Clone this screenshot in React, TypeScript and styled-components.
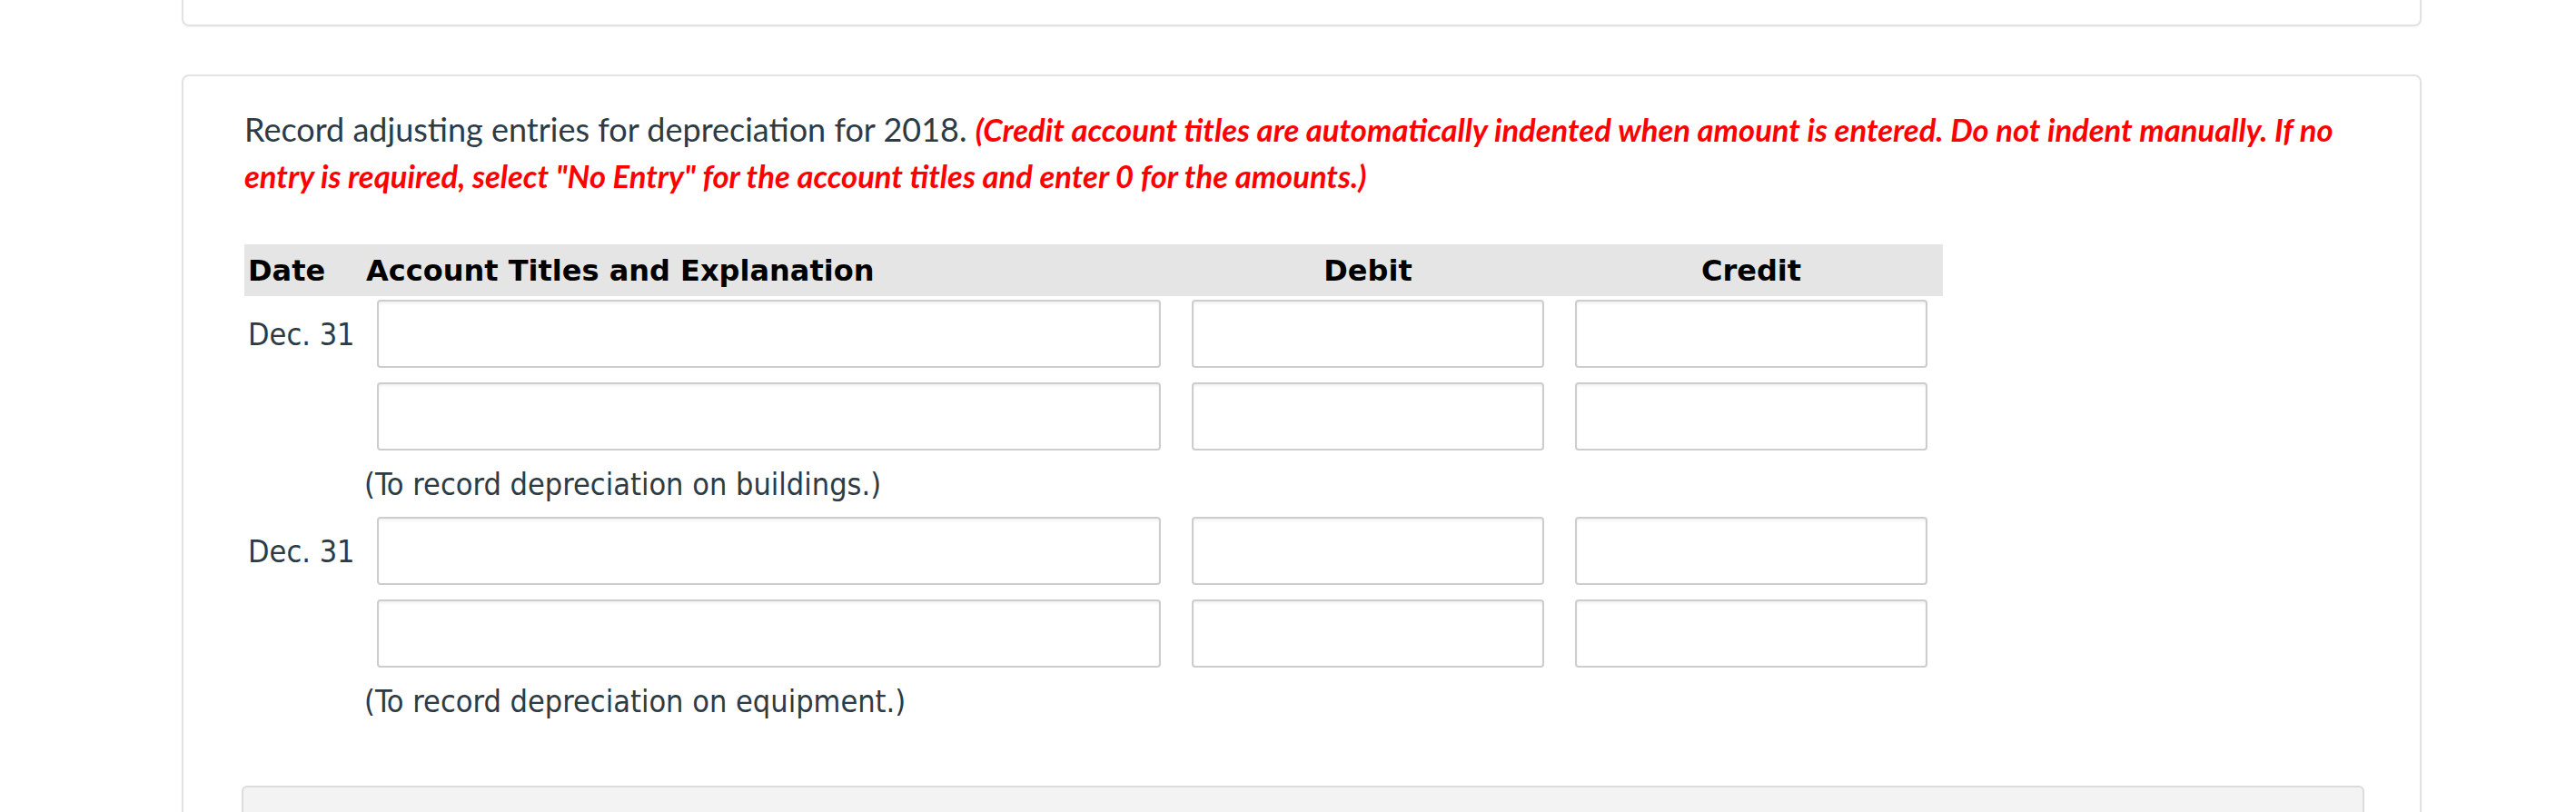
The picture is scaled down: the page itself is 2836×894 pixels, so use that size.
import React from 'react';
import styled, { createGlobalStyle } from 'styled-components';

const GlobalStyle = createGlobalStyle`
  html, body {
    margin: 0;
    padding: 0;
    background: #ffffff;
  }
  body {
    font-family: Lato, "Liberation Sans", sans-serif;
    color: #2d3b45;
  }
`;

const Page = styled.div`
  padding: 0 170px 0 200px;
  display: flex;
  flex-direction: column;
  gap: 53px;
`;

const TopCard = styled.div`
  height: 27px;
  border: 2px solid #e2e2e2;
  border-top: none;
  border-radius: 0 0 8px 8px;
  box-shadow: 0 1px 2px rgba(0, 0, 0, 0.05);
`;

const Card = styled.div`
  border: 2px solid #e2e2e2;
  border-radius: 8px;
  box-shadow: 0 1px 2px rgba(0, 0, 0, 0.05);
  padding: 33px 65px 0 67px;
`;

const Prompt = styled.p`
  margin: 0;
  font-family: Lato, "Liberation Sans", sans-serif;
  font-size: 36px;
  line-height: 50px;
  color: #2d3b45;
`;

const Hint = styled.em`
  color: #ff0000;
  font-size: 34.6px;
  font-weight: 700;
  font-style: italic;
`;

const Journal = styled.div`
  margin-top: 50px;
  width: 1870px;
  display: grid;
  grid-template-columns: 134px 892px 422px 422px;
  font-family: "DejaVu Sans Condensed", "DejaVu Sans", sans-serif;
  font-stretch: semi-condensed;
`;

const HeadRow = styled.div`
  grid-column: 1 / -1;
  display: grid;
  grid-template-columns: subgrid;
  align-items: center;
  height: 57px;
  margin-bottom: 4px;
  background: #e5e5e5;
  font-family: "DejaVu Sans", sans-serif;
  font-stretch: normal;
  font-weight: 700;
  font-size: 32px;
  color: #000;
`;

const HeadCell = styled.div<{ $center?: boolean; $pad?: number }>`
  padding-left: ${(p) => p.$pad ?? 0}px;
  text-align: ${(p) => (p.$center ? 'center' : 'left')};
  white-space: nowrap;
`;

const EntryRow = styled.div`
  grid-column: 1 / -1;
  display: grid;
  grid-template-columns: subgrid;
  align-items: center;
  height: 75px;
  margin-bottom: 16px;
`;

const DateCell = styled.div`
  padding-left: 4px;
  font-size: 34px;
  color: #2d3b45;
  white-space: nowrap;
`;

const InputCell = styled.div<{ $left: number }>`
  padding: 0 17px 0 ${(p) => p.$left}px;
  height: 100%;
`;

const Field = styled.input`
  box-sizing: border-box;
  width: 100%;
  height: 100%;
  margin: 0;
  border: 2px solid #cdcdcd;
  border-radius: 4px;
  background: #fff;
  box-shadow: inset 0 2px 3px rgba(0, 0, 0, 0.06);
  outline: none;
`;

const Note = styled.div`
  grid-column: 1 / -1;
  padding-left: 132px;
  font-size: 34px;
  line-height: 40px;
  margin: 1px 0 16px;
  color: #2d3b45;
  white-space: nowrap;
`;

const Footer = styled.div`
  margin: 57px -4px 0 -3px;
  height: 60px;
  background: #f3f3f3;
  border: 2px solid #dcdcdc;
  border-bottom: none;
  border-radius: 6px 6px 0 0;
`;

const entries = [
  { date: 'Dec. 31', note: '(To record depreciation on buildings.)' },
  { date: 'Dec. 31', note: '(To record depreciation on equipment.)' },
];

const Line = ({ date }: { date?: string }) => (
  <EntryRow>
    <DateCell>{date}</DateCell>
    <InputCell $left={12}>
      <Field type="text" />
    </InputCell>
    <InputCell $left={17}>
      <Field type="text" />
    </InputCell>
    <InputCell $left={17}>
      <Field type="text" />
    </InputCell>
  </EntryRow>
);

const App = () => {
  return (
    <>
      <GlobalStyle />
      <Page>
        <TopCard />
        <Card>
          <Prompt>
            Record adjusting entries for depreciation for 2018.{' '}
            <Hint>
              (Credit account titles are automatically indented when amount is entered. Do not
              indent manually. If no entry is required, select "No Entry" for the account titles
              and enter 0 for the amounts.)
            </Hint>
          </Prompt>
          <Journal>
            <HeadRow>
              <HeadCell $pad={4}>Date</HeadCell>
              <HeadCell>Account Titles and Explanation</HeadCell>
              <HeadCell $center>Debit</HeadCell>
              <HeadCell $center>Credit</HeadCell>
            </HeadRow>
            {entries.map((e, i) => (
              <React.Fragment key={i}>
                <Line date={e.date} />
                <Line />
                <Note>{e.note}</Note>
              </React.Fragment>
            ))}
          </Journal>
          <Footer />
        </Card>
      </Page>
    </>
  );
};

export default App;
